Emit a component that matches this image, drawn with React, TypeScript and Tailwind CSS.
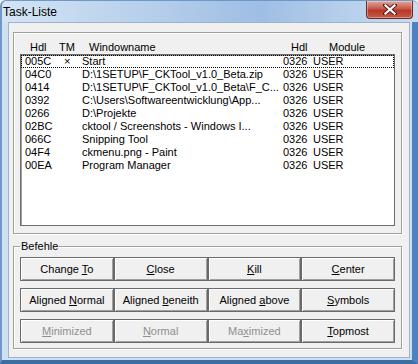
import React from "react";

const rows = [
  ["005C", "×", "Start"],
  ["04C0", "", "D:\\1SETUP\\F_CKTool_v1.0_Beta.zip"],
  ["0414", "", "D:\\1SETUP\\F_CKTool_v1.0_Beta\\F_C..."],
  ["0392", "", "C:\\Users\\Softwareentwicklung\\App..."],
  ["0266", "", "D:\\Projekte"],
  ["02BC", "", "cktool / Screenshots - Windows I..."],
  ["066C", "", "Snipping Tool"],
  ["04F4", "", "ckmenu.png - Paint"],
  ["00EA", "", "Program Manager"],
];

type Btn = { pre: string; key: string; post: string; disabled?: boolean };

const buttons: Btn[] = [
  { pre: "Change ", key: "T", post: "o" },
  { pre: "", key: "C", post: "lose" },
  { pre: "", key: "K", post: "ill" },
  { pre: "", key: "C", post: "enter" },
  { pre: "Aligned ", key: "N", post: "ormal" },
  { pre: "Aligned ", key: "b", post: "eneith" },
  { pre: "Aligned ", key: "a", post: "bove" },
  { pre: "", key: "S", post: "ymbols" },
  { pre: "", key: "M", post: "inimized", disabled: true },
  { pre: "", key: "N", post: "ormal", disabled: true },
  { pre: "Ma", key: "x", post: "imized", disabled: true },
  { pre: "", key: "T", post: "opmost" },
];

function CloseButton() {
  return (
    <div className="absolute right-[5px] top-0 flex h-[18px] w-[47px] items-center justify-center rounded-b-[4px] border border-t-0 border-[#6b2a2a] bg-[linear-gradient(to_bottom,#e0a69a,#c7594a_45%,#b5382a_55%,#c85a40)] shadow-[inset_0_0_0_1px_rgba(255,255,255,0.35)]">
      <svg width="14" height="11" viewBox="0 0 14 11">
        <path d="M2 1 L12 10 M12 1 L2 10" stroke="#5a1a14" strokeWidth="4" strokeLinecap="square" />
        <path d="M2.5 1.5 L11.5 9.5 M11.5 1.5 L2.5 9.5" stroke="#ffffff" strokeWidth="2.2" strokeLinecap="square" />
      </svg>
    </div>
  );
}

export default function App() {
  return (
    <div className="flex h-[364px] w-[418px] flex-col overflow-hidden bg-[#f0f0f0] font-['Liberation_Sans',Arial,sans-serif] text-[11px] text-black">
      {/* title bar */}
      <div className="relative h-[22px] shrink-0 rounded-t-[6px] border-l-2 border-t border-[#6e98c8] bg-[linear-gradient(to_right,#d4e4f4,#b6cfeb_35%,#9fbee4_62%,#b3cdea_80%,#c8dcf1)] pl-[1px]">
        <span className="block pt-[4px] text-[12px] leading-[14px]">Task-Liste</span>
        <CloseButton />
      </div>

      {/* frame + client */}
      <div className="flex flex-1 border-b-[4px] border-l-2 border-r-[6px] border-b-[#3c6ea6] border-l-[#6e98c8] border-r-[#4a82c4] bg-[#cfe0f2] pb-[2px] pl-[6px] pr-[2px]">
        <div className="flex flex-1 flex-col border border-[#9db3cc] bg-[#f0f0f0] pl-[4px] pr-[7px] pt-[9px]">
          {/* list group */}
          <div className="h-[202px] border border-[#a0a0a0] px-[6px] pt-[7px] shadow-[inset_1px_1px_0_#ffffff,1px_1px_0_#ffffff]">
            <div className="flex h-[14px] pl-[10px] leading-[14px]">
              <span className="w-[29px]">Hdl</span>
              <span className="w-[30px]">TM</span>
              <span className="w-[202px]">Windowname</span>
              <span className="w-[38px]">Hdl</span>
              <span>Module</span>
            </div>
            <div className="h-[172px] border border-[#6d6d6d] bg-white pt-[0px] shadow-[inset_1px_1px_0_#a0a0a0]">
              {rows.map((r, i) => (
                <div
                  key={r[0]}
                  className={
                    i === 0
                      ? "flex h-[13px] border border-dotted border-black pl-[3px] leading-[11px]"
                      : "flex h-[13px] pl-[4px] leading-[13px]"
                  }
                >
                  <span className="w-[39px]">{r[0]}</span>
                  <span className="w-[18px]">{r[1]}</span>
                  <span className="w-[201px] whitespace-nowrap">{r[2]}</span>
                  <span className="w-[30px]">0326</span>
                  <span>USER</span>
                </div>
              ))}
            </div>
          </div>

          {/* Befehle group */}
          <div className="relative mt-[12px] border border-[#a0a0a0] px-[6px] pb-[5px] pt-[10px] shadow-[inset_1px_1px_0_#ffffff,1px_1px_0_#ffffff]">
            <span className="absolute left-[6px] top-[-7px] bg-[#f0f0f0] px-[1px] leading-[13px]">Befehle</span>
            <div className="grid grid-cols-4 gap-y-[7px]">
              {buttons.map((b, i) => (
                <div
                  key={i}
                  className={
                    "flex h-[24px] items-center justify-center border border-[#6a6a6a] bg-[#f0f0f0] leading-[13px] shadow-[inset_1px_1px_0_#ffffff,inset_-1px_-1px_0_#a0a0a0] " +
                    (b.disabled ? "text-[#8f8f8f]" : "text-black")
                  }
                >
                  <span>
                    {b.pre}
                    <u className="underline-offset-[1px]">{b.key}</u>
                    {b.post}
                  </span>
                </div>
              ))}
            </div>
          </div>
        </div>
      </div>
    </div>
  );
}
